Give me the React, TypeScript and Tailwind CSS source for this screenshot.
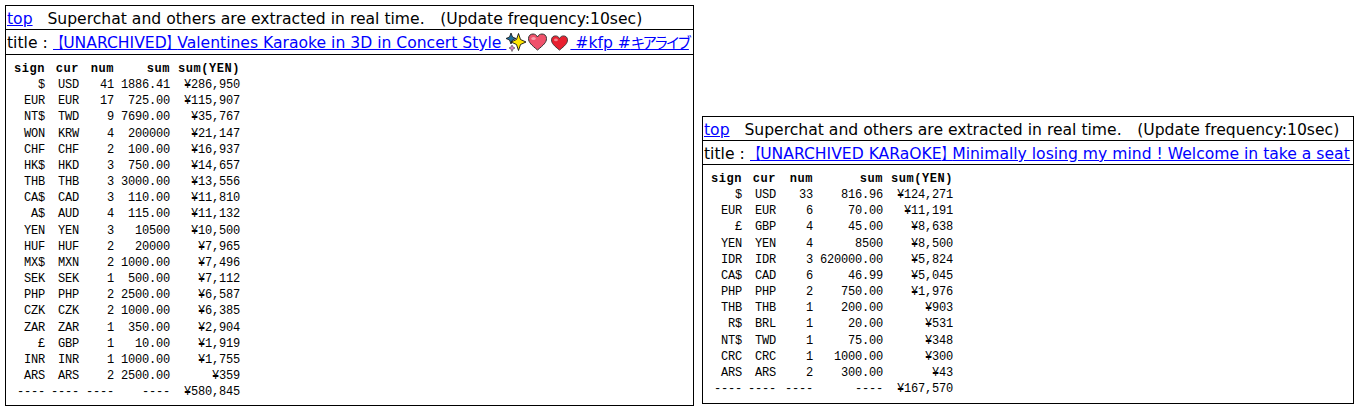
import React from "react";

type Row = [string, string, string, string, string];

const leftRows: Row[] = [
  ["$", "USD", "41", "1886.41", "¥286,950"],
  ["EUR", "EUR", "17", "725.00", "¥115,907"],
  ["NT$", "TWD", "9", "7690.00", "¥35,767"],
  ["WON", "KRW", "4", "200000", "¥21,147"],
  ["CHF", "CHF", "2", "100.00", "¥16,937"],
  ["HK$", "HKD", "3", "750.00", "¥14,657"],
  ["THB", "THB", "3", "3000.00", "¥13,556"],
  ["CA$", "CAD", "3", "110.00", "¥11,810"],
  ["A$", "AUD", "4", "115.00", "¥11,132"],
  ["YEN", "YEN", "3", "10500", "¥10,500"],
  ["HUF", "HUF", "2", "20000", "¥7,965"],
  ["MX$", "MXN", "2", "1000.00", "¥7,496"],
  ["SEK", "SEK", "1", "500.00", "¥7,112"],
  ["PHP", "PHP", "2", "2500.00", "¥6,587"],
  ["CZK", "CZK", "2", "1000.00", "¥6,385"],
  ["ZAR", "ZAR", "1", "350.00", "¥2,904"],
  ["£", "GBP", "1", "10.00", "¥1,919"],
  ["INR", "INR", "1", "1000.00", "¥1,755"],
  ["ARS", "ARS", "2", "2500.00", "¥359"],
  ["----", "----", "----", "----", "¥580,845"],
];

const rightRows: Row[] = [
  ["$", "USD", "33", "816.96", "¥124,271"],
  ["EUR", "EUR", "6", "70.00", "¥11,191"],
  ["£", "GBP", "4", "45.00", "¥8,638"],
  ["YEN", "YEN", "4", "8500", "¥8,500"],
  ["IDR", "IDR", "3", "620000.00", "¥5,824"],
  ["CA$", "CAD", "6", "46.99", "¥5,045"],
  ["PHP", "PHP", "2", "750.00", "¥1,976"],
  ["THB", "THB", "1", "200.00", "¥903"],
  ["R$", "BRL", "1", "20.00", "¥531"],
  ["NT$", "TWD", "1", "75.00", "¥348"],
  ["CRC", "CRC", "1", "1000.00", "¥300"],
  ["ARS", "ARS", "2", "300.00", "¥43"],
  ["----", "----", "----", "----", "¥167,570"],
];

function Sparkle() {
  return (
    <svg width="20" height="20" viewBox="0 0 20 20" className="inline-block align-[-4px]">
      <path d="M5 1 L6.5 5 L10 6.5 L6.5 8 L5 12 L3.5 8 L0 6.5 L3.5 5Z" fill="#1f6f9c" stroke="#111" strokeWidth="0.8" />
      <path d="M6 13 L7 15 L9 16 L7 17 L6 19.5 L5 17 L3 16 L5 15Z" fill="#d77fc0" stroke="#444" strokeWidth="0.6" />
      <path d="M12.5 1.5 L14.5 7.5 L20 10 L14.5 12.5 L12.5 18.5 L10.5 12.5 L5 10 L10.5 7.5Z" fill="#ffe600" stroke="#111" strokeWidth="0.9" />
    </svg>
  );
}

function Heart({ fill, small }: { fill: string; small?: boolean }) {
  return (
    <svg width={small ? 19 : 21} height={small ? 16 : 18} viewBox="0 0 20 18" className="mx-[1px] inline-block align-[-3px]">
      <path
        d="M10 17 C4 12 1 9.5 1 5.5 C1 2.5 3.2 1 5.5 1 C7.5 1 9 2 10 4 C11 2 12.5 1 14.5 1 C16.8 1 19 2.5 19 5.5 C19 9.5 16 12 10 17Z"
        fill={fill}
        stroke="#333"
        strokeWidth="1"
      />
      <ellipse cx="6" cy="5.5" rx="2.2" ry="1.6" fill="#fff" opacity="0.45" />
    </svg>
  );
}

// the reference's brackets are narrower than a full em, so squeeze them
function Bracket({ glyph }: { glyph: string }) {
  return (
    <span className="inline-block w-[10.5px]">
      <span className="inline-block origin-left scale-x-[0.67] font-bold underline">{glyph}</span>
    </span>
  );
}

function Panel({
  title,
  rows,
  className,
  titleClass,
  numClass,
}: {
  title: React.ReactNode;
  rows: Row[];
  className: string;
  titleClass: string;
  numClass: string;
}) {
  const cols = ["", "pl-[6px]", numClass, "pl-[7px]", "pl-[8px]"];
  return (
    <div className={`${className} shrink-0 border border-black text-[15.6px] leading-[26px] text-black`}>
      <div className="h-[24px] border-b border-black pl-[1px] whitespace-nowrap">
        <a href="#" className="text-[#0000ff] underline">top</a>
        <span className="whitespace-pre">{"   Superchat and others are extracted in real time.　(Update frequency:10sec)"}</span>
      </div>
      <div className={`${titleClass} border-b border-black pl-[1px] whitespace-nowrap overflow-hidden`}>
        title : <a href="#" className="text-[#0000ff] underline">{title}</a>
      </div>
      <table className="mt-[6px] ml-[8px] border-collapse font-['Liberation_Mono',monospace] text-[12px] leading-[16.15px]">
        <thead>
          <tr>
            {["sign", "cur", "num", "sum", "sum(YEN)"].map((h, i) => (
              <th key={i} className={`${cols[i]} text-right font-bold tracking-[0.55px]`}>{h}</th>
            ))}
          </tr>
        </thead>
        <tbody>
          {rows.map((r, n) => (
            <tr key={n}>
              {r.map((c, i) => (
                <td key={i} className={`${cols[i]} text-right tracking-[-0.2px] whitespace-pre`}>{c}</td>
              ))}
            </tr>
          ))}
        </tbody>
      </table>
    </div>
  );
}

export default function App() {
  return (
    <div className="flex h-[409px] w-[1369px] items-start gap-[8px] overflow-hidden bg-white pl-[5px] pt-[5px] font-['DejaVu_Sans','Noto_Sans_CJK_JP',sans-serif]">
      <Panel
        className="h-[401px] w-[689px]"
        titleClass="h-[25px]"
        numClass="pl-[7px]"
        rows={leftRows}
        title={
          <>
            <Bracket glyph="【" />UNARCHIVED<Bracket glyph="】" />Valentines Karaoke in 3D in Concert Style <Sparkle /><Heart fill="#f0526b" /><Heart fill="#e8202f" small /> #kfp  #<span className="text-[14.5px] tracking-[-2.9px]">キアライブ</span>
          </>
        }
      />
      <Panel
        className="mt-[111px] h-[288px] w-[652px]"
        titleClass="h-[24px]"
        numClass="pl-[9px]"
        rows={rightRows}
        title={
          <>
            <Bracket glyph="【" />UNARCHIVED KARaOKE<Bracket glyph="】" />Minimally losing my mind ! Welcome in take a seat
          </>
        }
      />
    </div>
  );
}
